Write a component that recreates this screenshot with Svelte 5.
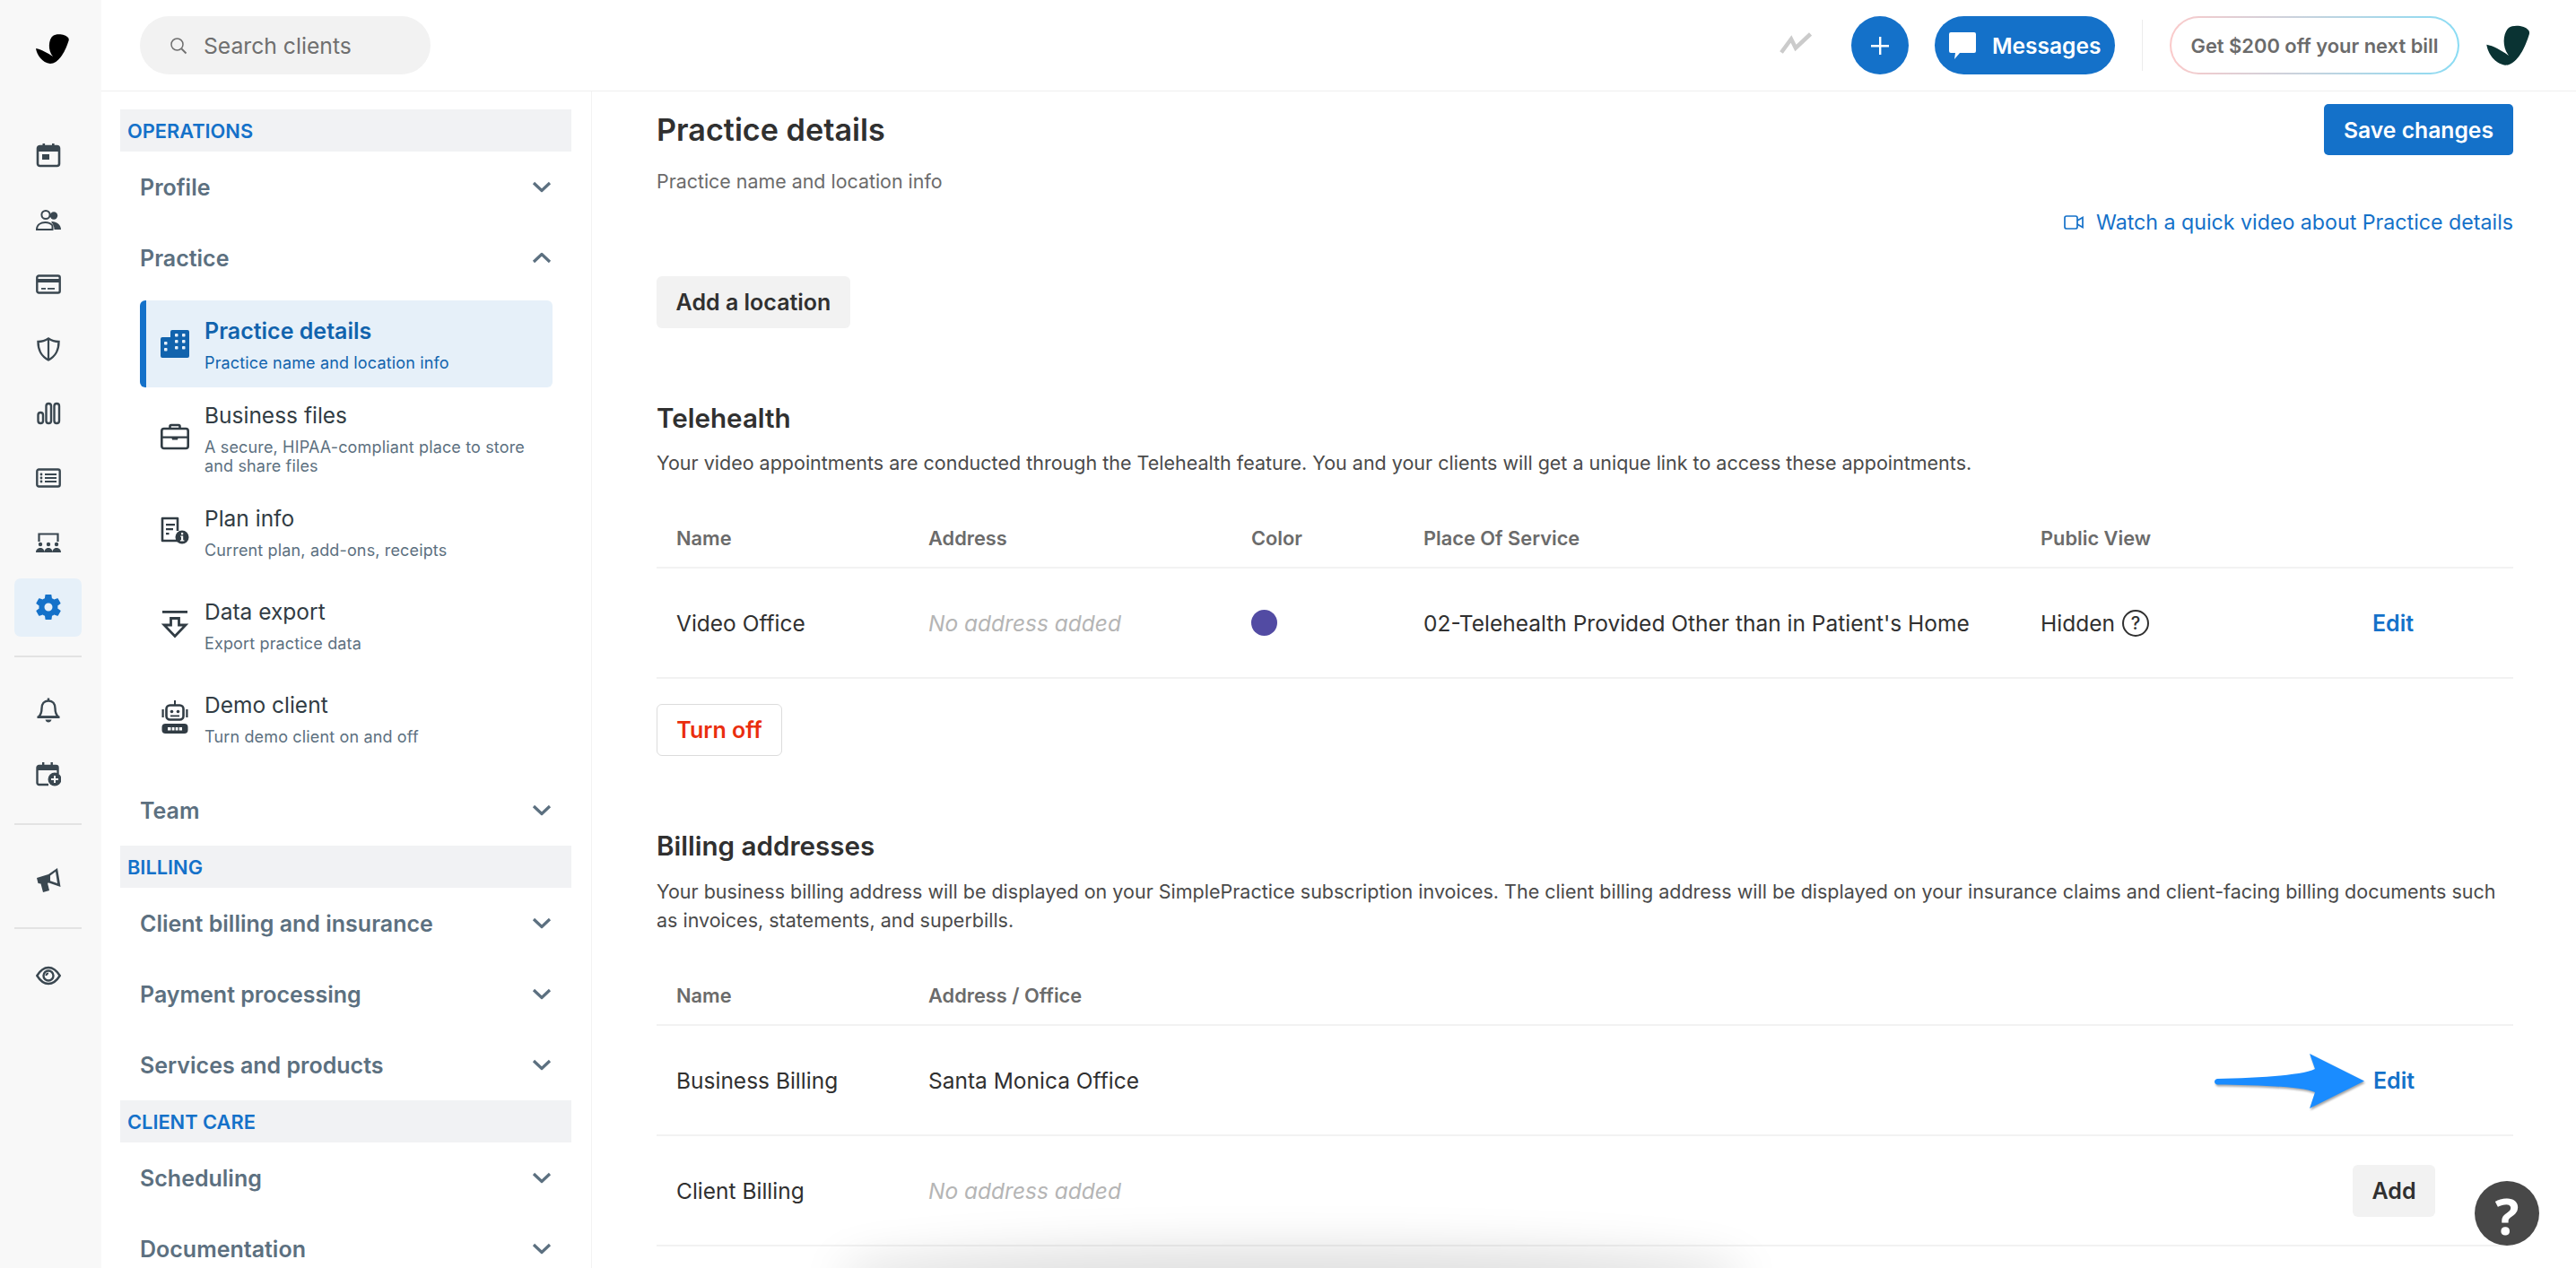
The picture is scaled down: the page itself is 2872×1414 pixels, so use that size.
<script>
	const railIcons = {
		calendar: `<rect x="2" y="4" width="24" height="22" rx="2.500" fill="none" stroke="currentColor" stroke-width="2.600"/><path d="M2 5h24v5H2zM7.500 1h2.600v5H7.500zM18 1h2.600v5H18z" fill="currentColor"/><rect x="7" y="13" width="8" height="6" fill="currentColor"/>`,
		clients: `<circle cx="11" cy="8.500" r="4.600" fill="none" stroke="currentColor" stroke-width="2"/><path d="M1 25c0-5.500 4.500-8 9.500-8 3.500 0 6 1 8 3.500V25z" fill="none" stroke="currentColor" stroke-width="2"/><circle cx="20" cy="9.500" r="4.200" fill="currentColor"/><path d="M18 16c5 0 10 3.500 10 9h-7.500c0-3.500-1-6-3.500-8.500z" fill="currentColor"/>`,
		card: `<rect x="1.300" y="4.500" width="25.400" height="19" rx="2" fill="none" stroke="currentColor" stroke-width="2.400"/><path d="M2 8h24v4H2zM6 18h5v1.800H6zM13 18h8v1.800h-8z" fill="currentColor"/>`,
		shield: `<path d="M14 2.500c3 2 7 3.500 11.500 3.500 0 9-2.500 15.500-11.500 20.500C5 21.500 2.500 15 2.500 6 7 6 11 4.500 14 2.500z" fill="none" stroke="currentColor" stroke-width="2.400"/><path d="M12.900 2h2.200v25h-2.200z" fill="currentColor"/>`,
		bars: `<g fill="none" stroke="currentColor" stroke-width="2.400"><rect x="2.500" y="13" width="5.500" height="12" rx="2.700"/><rect x="11.500" y="3" width="5.500" height="22" rx="2.700"/><rect x="20.500" y="3" width="5.500" height="22" rx="2.700"/></g>`,
		list: `<rect x="1.300" y="4.500" width="25.400" height="19" rx="2" fill="none" stroke="currentColor" stroke-width="2.400"/><path d="M10 9h13v2H10zM10 13h13v2H10zM10 17h13v2H10z" fill="currentColor"/><circle cx="6" cy="10" r="1.400" fill="currentColor"/><circle cx="6" cy="14" r="1.400" fill="currentColor"/><circle cx="6" cy="18" r="1.400" fill="currentColor"/>`,
		room: `<path d="M3.500 13V4.500h21V13" fill="none" stroke="currentColor" stroke-width="2.200"/><g fill="currentColor"><circle cx="5" cy="16" r="2.200"/><circle cx="14" cy="16" r="2.200"/><circle cx="23" cy="16" r="2.200"/><path d="M0 25c0-3.500 2.500-5 5-5s4.500 1.500 4.500 5zM9.500 25c0-3.500 2-5 4.500-5s4.500 1.500 4.500 5zM18.500 25c0-3.500 2-5 4.500-5s5 1.500 5 5z"/></g>`,
		gear: `<path fill="currentColor" d="M24.300 15.400c.1-.5.100-.9.100-1.400s0-.9-.1-1.400l3-2.300c.3-.2.300-.6.200-.9l-2.800-4.900c-.2-.3-.5-.4-.9-.3l-3.500 1.400c-.7-.6-1.500-1-2.400-1.400l-.5-3.700c-.1-.3-.4-.6-.7-.6h-5.600c-.4 0-.6.300-.7.600l-.5 3.700c-.9.400-1.700.8-2.400 1.400L4.100 4.200c-.3-.1-.7 0-.9.300L.4 9.400c-.2.300-.1.700.2.900l3 2.300c-.1.500-.1.900-.1 1.400s0 .9.100 1.400l-3 2.300c-.3.200-.3.600-.2.900l2.800 4.900c.2.300.5.400.9.300l3.500-1.400c.7.600 1.500 1 2.400 1.400l.5 3.700c.1.300.3.600.7.600h5.600c.3 0 .6-.3.700-.6l.5-3.700c.9-.4 1.700-.8 2.400-1.400l3.500 1.400c.3.100.7 0 .9-.3l2.800-4.900c.2-.3.100-.7-.2-.9zM14 18.500a4.500 4.500 0 1 1 0-9 4.500 4.500 0 0 1 0 9z"/>`,
		bell: `<path d="M14 3.500c-4.800 0-7.500 3.500-7.500 8.500 0 4-1 7-3.500 9.500h22c-2.500-2.500-3.500-5.500-3.500-9.500 0-5-2.700-8.500-7.500-8.500z" fill="none" stroke="currentColor" stroke-width="2.400" stroke-linejoin="round"/><path d="M12.800 .5h2.400v3.500h-2.400zM1.500 20.500h25v2.400h-25zM10.500 24.500h7c-.5 2-1.800 3-3.500 3s-3-1-3.500-3z" fill="currentColor"/>`,
		calPlus: `<path d="M14 25H3.500A2 2 0 0 1 1.500 23V6a2 2 0 0 1 2-2h19a2 2 0 0 1 2 2v7" fill="none" stroke="currentColor" stroke-width="2.400"/><path d="M2 4h22v5H2zM7 0h2.400v4H7zM16.500 0h2.400v4h-2.400z" fill="currentColor"/><circle cx="21" cy="19" r="7.500" fill="currentColor"/><path d="M20 15h2v3h3v2h-3v3h-2v-3h-3v-2h3z" fill="#f8f8f8"/>`,
		megaphone: `<path d="M1 12l13-4 10-7 3.500 21-13-4.500-1.500.3L15 26l-7 2-2.500-9.500L2.500 18z" fill="currentColor"/><path d="M16 9.500l6-4.500 2 13-8-2.800z" fill="#f8f8f8"/>`,
		eye: `<path d="M1.300 14C5 8 9 5 14 5s9 3 12.700 9C23 20 19 23 14 23S5 20 1.300 14z" fill="none" stroke="currentColor" stroke-width="2.400"/><circle cx="14" cy="14" r="5.500" fill="none" stroke="currentColor" stroke-width="2.400"/><path d="M14 10.500a3.500 3.500 0 0 0-3.500 3.500h2c0-1 .5-1.500 1.500-1.500z" fill="currentColor"/>`
	};

	const subIcons = {
		files: `<path d="M10.500 7V4.500A1.500 1.500 0 0 1 12 3h8a1.500 1.500 0 0 1 1.500 1.500V7" fill="none" stroke="currentColor" stroke-width="2.600"/><rect x="1.300" y="7" width="29.400" height="22" rx="2.500" fill="none" stroke="currentColor" stroke-width="2.600"/><path d="M2 15.500h28v2.200H2zM12 16h8l-1 3.500h-6z" fill="currentColor"/>`,
		plan: `<path d="M20 27H2V2h17v14" fill="none" stroke="currentColor" stroke-width="2.600" stroke-linejoin="round"/><path d="M6 8h10v2.200H6zM6 13h8v2.200H6zM6 18h3.500v2.200H6z" fill="currentColor"/><circle cx="24" cy="23" r="7.500" fill="currentColor"/><path d="M23 18h2.200v2.200H23zM22.300 21.500H25.200v4.700h1.200v1.300h-4.500v-1.300H23V22.800h-.7z" fill="#fff"/>`,
		export: `<path d="M2 1h28v2.800H2z" fill="currentColor"/><path d="M11.500 9.500h9V17H28L16 29.500 4 17h7.500z" fill="none" stroke="currentColor" stroke-width="2.800" stroke-linejoin="miter"/>`,
		robot: `<path d="M15 0h2v6h-2z" fill="currentColor"/><rect x="6.500" y="5.500" width="19" height="16" rx="4" fill="none" stroke="currentColor" stroke-width="2.600"/><path d="M1.500 10h2.200v9H1.500zM28.300 10h2.200v9h-2.200z" fill="currentColor"/><circle cx="12.500" cy="12.500" r="1.800" fill="currentColor"/><circle cx="19.500" cy="12.500" r="1.800" fill="currentColor"/><path d="M11 16.500h10v1.800H11z" fill="currentColor"/><rect x="1.500" y="26" width="29" height="11" rx="4" fill="currentColor"/><path d="M8 30h16v3.500H8z" fill="#fff"/><path d="M11.500 29.500h1.200v4.500h-1.200zM15.500 29.500h1.200v4.500h-1.200zM19.500 29.500h1.200v4.500h-1.200z" fill="currentColor"/>`
	};

	const logoPath =
		'M75 41C72 37 62 36 58 39 53 43 52 55 58 62 52 58 45 54 39 53 40 60 46 69 55 70 64 70 71 58 75 46 76 44 76 42 75 41Z';

	const railGroups = [
		['calendar', 'clients', 'card', 'shield', 'bars', 'list', 'room', 'gear'],
		['bell', 'calPlus'],
		['megaphone'],
		['eye']
	];

	const subItems = [
		{ icon: 'files', title: 'Business files', text: 'A secure, HIPAA-compliant place to store and share files', cls: 'tall' },
		{ icon: 'plan', title: 'Plan info', text: 'Current plan, add-ons, receipts' },
		{ icon: 'export', title: 'Data export', text: 'Export practice data' },
		{ icon: 'robot', title: 'Demo client', text: 'Turn demo client on and off' }
	];
</script>

{#snippet chevron(up)}
	<svg class="chevron" viewBox="0 0 22 13" aria-hidden="true">
		<path d={up ? 'M2 11l9-8.500 9 8.500' : 'M2 2l9 8.500 9-8.500'} fill="none" stroke="currentColor" stroke-width="3.200" stroke-linejoin="round" />
	</svg>
{/snippet}

{#snippet navRow(label, up = false)}
	<div class="nav-row">
		<span>{label}</span>
		{@render chevron(up)}
	</div>
{/snippet}

<div class="page">
	<aside class="rail">
		<div class="rail-logo">
			<svg width="40" height="35" viewBox="38 36 40 35" aria-hidden="true"><path d={logoPath} fill="#000" /></svg>
		</div>
		{#each railGroups as group, i}
			{#if i > 0}<div class="rail-divider after-{i}"></div>{/if}
			{#each group as name}
				<div class="rail-item" class:active={name === 'gear'}>
					<span class="rail-tile">
						<svg width="28" height="28" viewBox="0 0 28 28" aria-hidden="true">{@html railIcons[name]}</svg>
					</span>
				</div>
			{/each}
		{/each}
	</aside>

	<div class="right">
		<header class="topbar">
			<div class="search">
				<svg width="20" height="20" viewBox="0 0 20 20" aria-hidden="true">
					<circle cx="8.500" cy="8.500" r="6.500" fill="none" stroke="#6f6f6f" stroke-width="1.500" />
					<path d="M13.500 13.500l5 5" stroke="#6f6f6f" stroke-width="1.800" />
				</svg>
				<span>Search clients</span>
			</div>
			<div class="top-actions">
				<svg class="trend" width="36" height="24" viewBox="0 0 36 24" aria-hidden="true">
					<path d="M2 22.500l11-15 5 10L34.500 2" fill="none" stroke="#cbcbcb" stroke-width="4.500" />
				</svg>
				<button class="round-btn" aria-label="Add">
					<svg width="22" height="22" viewBox="0 0 22 22"><path d="M10 1h2.400v9H21v2.400h-8.600V21H10v-8.600H1V10h9z" fill="#fff" /></svg>
				</button>
				<button class="messages-btn">
					<svg width="32" height="32" viewBox="0 0 32 32" aria-hidden="true">
						<path d="M3 1h26a2 2 0 0 1 2 2v19a2 2 0 0 1-2 2H13l-6 7 1-7H3a2 2 0 0 1-2-2V3a2 2 0 0 1 2-2z" fill="#fff" />
					</svg>
					Messages
				</button>
				<div class="top-divider"></div>
				<button class="promo">Get $200 off your next bill</button>
				<svg class="avatar" width="52" height="47" viewBox="38 36 40 35" preserveAspectRatio="none" aria-hidden="true"><path d={logoPath} fill="#0a3333" /></svg>
			</div>
		</header>

		<div class="body">
			<nav class="sidebar">
				<div class="section-label">OPERATIONS</div>
				{@render navRow('Profile')}
				{@render navRow('Practice', true)}

				<div class="sub-list">
					<div class="sub-item current">
						<div class="sub-inner">
							<svg class="sub-icon" viewBox="0 0 32 32" aria-hidden="true">
								<path d="M11 3a2 2 0 0 1 2-2h17a2 2 0 0 1 2 2v27a2 2 0 0 1-2 2H2a2 2 0 0 1-2-2V11a2 2 0 0 1 2-2h9z" fill="currentColor" />
								<g fill="#e6f0f9">
									<rect x="16" y="5" width="3.500" height="3.500" rx=".8" /><rect x="24" y="5" width="3.500" height="3.500" rx=".8" />
									<rect x="16" y="12" width="3.500" height="3.500" rx=".8" /><rect x="24" y="12" width="3.500" height="3.500" rx=".8" />
									<rect x="16" y="19" width="3.500" height="3.500" rx=".8" /><rect x="24" y="19" width="3.500" height="3.500" rx=".8" />
									<rect x="4" y="14" width="3.500" height="3.500" rx=".8" /><rect x="4" y="21" width="3.500" height="3.500" rx=".8" />
								</g>
							</svg>
							<div class="sub-text">
								<div class="sub-title">Practice details</div>
								<div class="sub-desc">Practice name and location info</div>
							</div>
						</div>
					</div>
					{#each subItems as item}
						<div class="sub-item {item.cls ?? ''}">
							<div class="sub-inner">
								<svg class="sub-icon" class:robot={item.icon === 'robot'} viewBox={item.icon === 'robot' ? '0 0 32 37' : '0 0 32 32'} aria-hidden="true">{@html subIcons[item.icon]}</svg>
								<div class="sub-text">
									<div class="sub-title">{item.title}</div>
									<div class="sub-desc">{item.text}</div>
								</div>
							</div>
						</div>
					{/each}
				</div>

				<div class="team-row">{@render navRow('Team')}</div>
				<div class="section-label">BILLING</div>
				{@render navRow('Client billing and insurance')}
				{@render navRow('Payment processing')}
				{@render navRow('Services and products')}
				<div class="section-label">CLIENT CARE</div>
				{@render navRow('Scheduling')}
				{@render navRow('Documentation')}
			</nav>

			<main class="content">
				<div class="title-row">
					<div>
						<h1>Practice details</h1>
						<p class="subtitle">Practice name and location info</p>
					</div>
					<button class="btn-primary">Save changes</button>
				</div>
				<div class="video-row">
					<a href="#video" class="video-link">
						<svg width="22" height="16" viewBox="0 0 22 16" aria-hidden="true">
							<rect x="1" y="1" width="14" height="14" rx="2" fill="none" stroke="#1471c9" stroke-width="1.700" />
							<path d="M15 6l6-3.500v11L15 10" fill="none" stroke="#1471c9" stroke-width="1.700" />
						</svg>
						Watch a quick video about Practice details
					</a>
				</div>

				<button class="btn-grey add-location">Add a location</button>

				<h2 class="telehealth">Telehealth</h2>
				<p class="desc">Your video appointments are conducted through the Telehealth feature. You and your clients will get a unique link to access these appointments.</p>

				<div class="table">
					<div class="tr head cols-video">
						<div>Name</div><div>Address</div><div>Color</div><div>Place Of Service</div><div>Public View</div><div></div>
					</div>
					<div class="tr cols-video">
						<div>Video Office</div>
						<div class="empty">No address added</div>
						<div><span class="dot"></span></div>
						<div>02-Telehealth Provided Other than in Patient's Home</div>
						<div class="hidden-cell">Hidden <span class="hint">?</span></div>
						<div class="action"><a href="#edit" class="edit">Edit</a></div>
					</div>
				</div>

				<button class="btn-danger">Turn off</button>

				<h2 class="billing">Billing addresses</h2>
				<p class="desc billing-desc">Your business billing address will be displayed on your SimplePractice subscription invoices. The client billing address will be displayed on your insurance claims and client-facing billing documents such as invoices, statements, and superbills.</p>

				<div class="table">
					<div class="tr head cols-billing">
						<div>Name</div><div>Address / Office</div><div></div>
					</div>
					<div class="tr cols-billing">
						<div>Business Billing</div>
						<div>Santa Monica Office</div>
						<div class="action"><a href="#edit" class="edit">Edit</a></div>
					</div>
					<div class="tr cols-billing">
						<div>Client Billing</div>
						<div class="empty">No address added</div>
						<div class="action"><button class="btn-grey small">Add</button></div>
					</div>
				</div>
			</main>
		</div>
	</div>

	<svg class="arrow" width="180" height="72" viewBox="2465 1170 180 72" aria-hidden="true">
		<path d="M2472 1203C2510 1202 2565 1200 2581 1192L2575 1175 2636 1205.500 2575 1236 2581 1218C2565 1211 2510 1210 2472 1209.500 2468 1209 2468 1203.500 2472 1203Z" fill="#1a8cff" />
	</svg>
	<div class="bottom-glow"></div>
	<button class="help" aria-label="Help">?</button>
</div>

<style>
	:global(body) {
		margin: 0;
		background: #fff;
		overflow: hidden;
	}

	.page {
		position: relative;
		display: flex;
		width: 2872px;
		height: 1414px;
		overflow: hidden;
		font-family: Inter, 'Liberation Sans', sans-serif;
		color: #303030;
	}

	.rail {
		flex: 0 0 113px;
		box-sizing: border-box;
		padding-left: 16px;
		background: #f8f8f8;
		display: flex;
		flex-direction: column;
		color: #3a4750;
	}

	.rail-logo {
		height: 137px;
		padding: 37px 0 0 23px;
		box-sizing: border-box;
	}

	.rail-logo svg {
		display: block;
	}

	.rail-item {
		height: 72px;
		width: 75px;
		display: flex;
		align-items: center;
		justify-content: center;
		flex: none;
	}

	.rail-tile {
		width: 75px;
		height: 65px;
		display: flex;
		align-items: center;
		justify-content: center;
		border-radius: 7px;
	}

	.rail-item.active .rail-tile {
		background: #e6f0f9;
		color: #1471c9;
	}

	.rail-divider {
		width: 75px;
		height: 2px;
		background: #e3e3e3;
		margin-top: 18px;
		flex: none;
	}

	.after-1 {
		margin-bottom: 23px;
	}

	.after-2 {
		margin-bottom: 25px;
	}

	.after-3 {
		margin-top: 17px;
		margin-bottom: 16px;
	}

	.right {
		flex: 1;
		min-width: 0;
		display: flex;
		flex-direction: column;
	}

	.topbar {
		height: 102px;
		box-sizing: border-box;
		border-bottom: 1px solid #efefef;
		display: flex;
		justify-content: space-between;
		padding: 18px 49px 0 43px;
	}

	.search {
		width: 324px;
		height: 65px;
		box-sizing: border-box;
		border-radius: 33px;
		background: #f2f2f2;
		display: flex;
		align-items: center;
		gap: 18px;
		padding-left: 33px;
		font-size: 24.700px;
		color: #6f6f6f;
	}

	.top-actions {
		display: flex;
		align-items: flex-start;
	}

	.trend {
		margin: 18px 44px 0 0;
	}

	.round-btn {
		width: 64px;
		height: 65px;
		border: none;
		border-radius: 50%;
		background: #1471c9;
		display: flex;
		align-items: center;
		justify-content: center;
		padding: 0;
		margin-right: 29px;
	}

	.messages-btn {
		width: 201px;
		height: 65px;
		border: none;
		border-radius: 33px;
		background: #1471c9;
		color: #fff;
		display: flex;
		align-items: center;
		gap: 17px;
		padding: 0 0 0 15px;
		font: 600 24.500px Inter, sans-serif;
	}

	.top-divider {
		width: 1px;
		height: 57px;
		background: #ececec;
		margin: 4px 30px 0 30px;
	}

	.promo {
		width: 323px;
		height: 65px;
		border: 2px solid transparent;
		border-radius: 33px;
		background: linear-gradient(#fff, #fff) padding-box, linear-gradient(90deg, #fbcaca, #8adcf4) border-box;
		color: #6b6b6b;
		font: 600 21.900px Inter, sans-serif;
		padding: 0;
		margin-right: 29px;
	}

	.avatar {
		margin-top: 9px;
	}

	.body {
		flex: 1;
		min-height: 0;
		display: flex;
	}

	.sidebar {
		flex: 0 0 547px;
		box-sizing: border-box;
		border-right: 1px solid #f3f3f3;
		padding: 20px 22px 0 21px;
	}

	.section-label {
		height: 47px;
		background: #f1f2f4;
		display: flex;
		align-items: center;
		padding-left: 8px;
		color: #1471c9;
		font-size: 21.800px;
		font-weight: 600;
	}

	.nav-row {
		height: 79px;
		display: flex;
		align-items: center;
		justify-content: space-between;
		padding: 0 22px 0 22px;
		font-size: 25px;
		font-weight: 600;
		color: #5c7080;
	}

	.chevron {
		width: 22px;
		height: 13px;
		color: #5c7080;
	}

	.team-row {
		margin-top: 5px;
	}

	.sub-list {
		margin: 8px 21px 0 22px;
	}

	.sub-item {
		min-height: 104px;
		box-sizing: border-box;
		padding: 13px 0 0 23px;
	}

	.sub-item.tall {
		min-height: 115px;
	}

	.sub-item.current {
		min-height: 97px;
		padding: 16px 0 0 16px;
		border-left: 7px solid #1471c9;
		border-radius: 6px;
		background: #e6f0f9;
		color: #1163ad;
	}

	.sub-inner {
		display: flex;
		align-items: center;
		gap: 17px;
	}

	.sub-icon {
		flex: 0 0 32px;
		width: 32px;
		height: 32px;
		color: #313c44;
	}

	.sub-icon.robot {
		height: 37px;
	}

	.current .sub-icon {
		color: #1163ad;
	}

	.sub-title {
		font-size: 24.500px;
		line-height: 36px;
		color: #313c44;
	}

	.current .sub-title {
		font-size: 25px;
		font-weight: 600;
		color: #1163ad;
	}

	.sub-desc {
		margin-top: 6.500px;
		font-size: 18px;
		line-height: 21px;
		letter-spacing: 0.15px;
		color: #5c7080;
	}

	.current .sub-desc {
		color: #1163ad;
	}

	.content {
		flex: 1;
		min-width: 0;
		padding: 0 70px 0 72px;
	}

	.title-row {
		display: flex;
		justify-content: space-between;
		align-items: flex-start;
		padding-top: 14px;
	}

	h1 {
		margin: 9px 0 0;
		font-size: 34.200px;
		font-weight: 600;
		line-height: 40px;
		color: #303030;
	}

	.subtitle {
		margin: 22px 0 0;
		font-size: 21.400px;
		line-height: 30px;
		color: #6b6b6b;
	}

	.btn-primary {
		width: 211px;
		height: 57px;
		border: none;
		border-radius: 5px;
		background: #1471c9;
		color: #fff;
		padding: 0;
		font: 600 24.700px Inter, sans-serif;
	}

	.video-row {
		display: flex;
		justify-content: flex-end;
		margin-top: 16px;
	}

	.video-link {
		display: flex;
		align-items: center;
		gap: 14px;
		line-height: 30px;
		font-size: 23.200px;
		color: #1471c9;
		text-decoration: none;
	}

	.btn-grey {
		display: block;
		height: 58px;
		border: none;
		border-radius: 6px;
		background: #f2f2f2;
		color: #303030;
		font: 600 25px Inter, sans-serif;
		padding: 0;
	}

	.add-location {
		width: 216px;
		margin-top: 45px;
	}

	.small {
		width: 92px;
	}

	h2 {
		margin: 0;
		font-size: 29.600px;
		font-weight: 600;
		line-height: 36px;
		color: #303030;
	}

	.telehealth {
		margin-top: 82px;
	}

	.billing {
		margin-top: 82px;
	}

	.desc {
		margin: 16px 0 0;
		font-size: 21.500px;
		line-height: 32px;
		color: #4a4a4a;
	}

	.billing-desc {
		margin-top: 17px;
	}

	.table {
		margin-top: 35px;
	}

	.tr {
		display: grid;
		align-items: center;
		height: 123px;
		box-sizing: border-box;
		border-bottom: 2px solid #f2f2f2;
		padding-right: 45px;
		font-size: 24.500px;
		color: #303030;
	}

	.tr > div:first-child {
		padding-left: 22px;
	}

	.tr.head {
		height: 67px;
		font-size: 21.800px;
		font-weight: 600;
		color: #6b6b6b;
	}

	.cols-video {
		grid-template-columns: 303px 360px 192px 688px 305px 176px;
	}

	.cols-billing {
		grid-template-columns: 303px 1fr 176px;
	}

	.empty {
		font-style: italic;
		color: #b5b5b5;
	}

	.dot {
		display: block;
		width: 29px;
		height: 29px;
		border-radius: 50%;
		background: #524ba3;
	}

	.hidden-cell {
		display: flex;
		align-items: center;
		gap: 8px;
	}

	.hint {
		width: 30px;
		height: 30px;
		box-sizing: border-box;
		border: 2px solid #303030;
		border-radius: 50%;
		display: flex;
		align-items: center;
		justify-content: center;
		font-size: 20px;
		font-weight: 500;
	}

	.action {
		display: flex;
		justify-content: center;
	}

	.edit {
		color: #1471c9;
		font-size: 25px;
		font-weight: 600;
		text-decoration: none;
	}

	.btn-danger {
		display: block;
		width: 140px;
		height: 58px;
		margin-top: 28px;
		box-sizing: border-box;
		border: 1px solid #dcdcdc;
		border-radius: 6px;
		background: #fff;
		color: #ea2e0e;
		font: 600 25px Inter, sans-serif;
		padding: 0;
	}

	.arrow {
		position: absolute;
		left: 2465px;
		top: 1170px;
		filter: drop-shadow(1px 2px 1px rgba(0, 0, 0, 0.35));
	}

	.bottom-glow {
		position: absolute;
		left: 960px;
		top: 1414px;
		width: 960px;
		height: 20px;
		border-radius: 50%;
		box-shadow: 0 0 50px 24px rgba(0, 0, 0, 0.13);
	}

	.help {
		position: absolute;
		left: 2759px;
		top: 1317px;
		width: 72px;
		height: 72px;
		border: none;
		border-radius: 50%;
		background: #484848;
		color: #fff;
		padding: 0;
		font: 700 56px 'Open Sans', sans-serif;
	}
</style>
